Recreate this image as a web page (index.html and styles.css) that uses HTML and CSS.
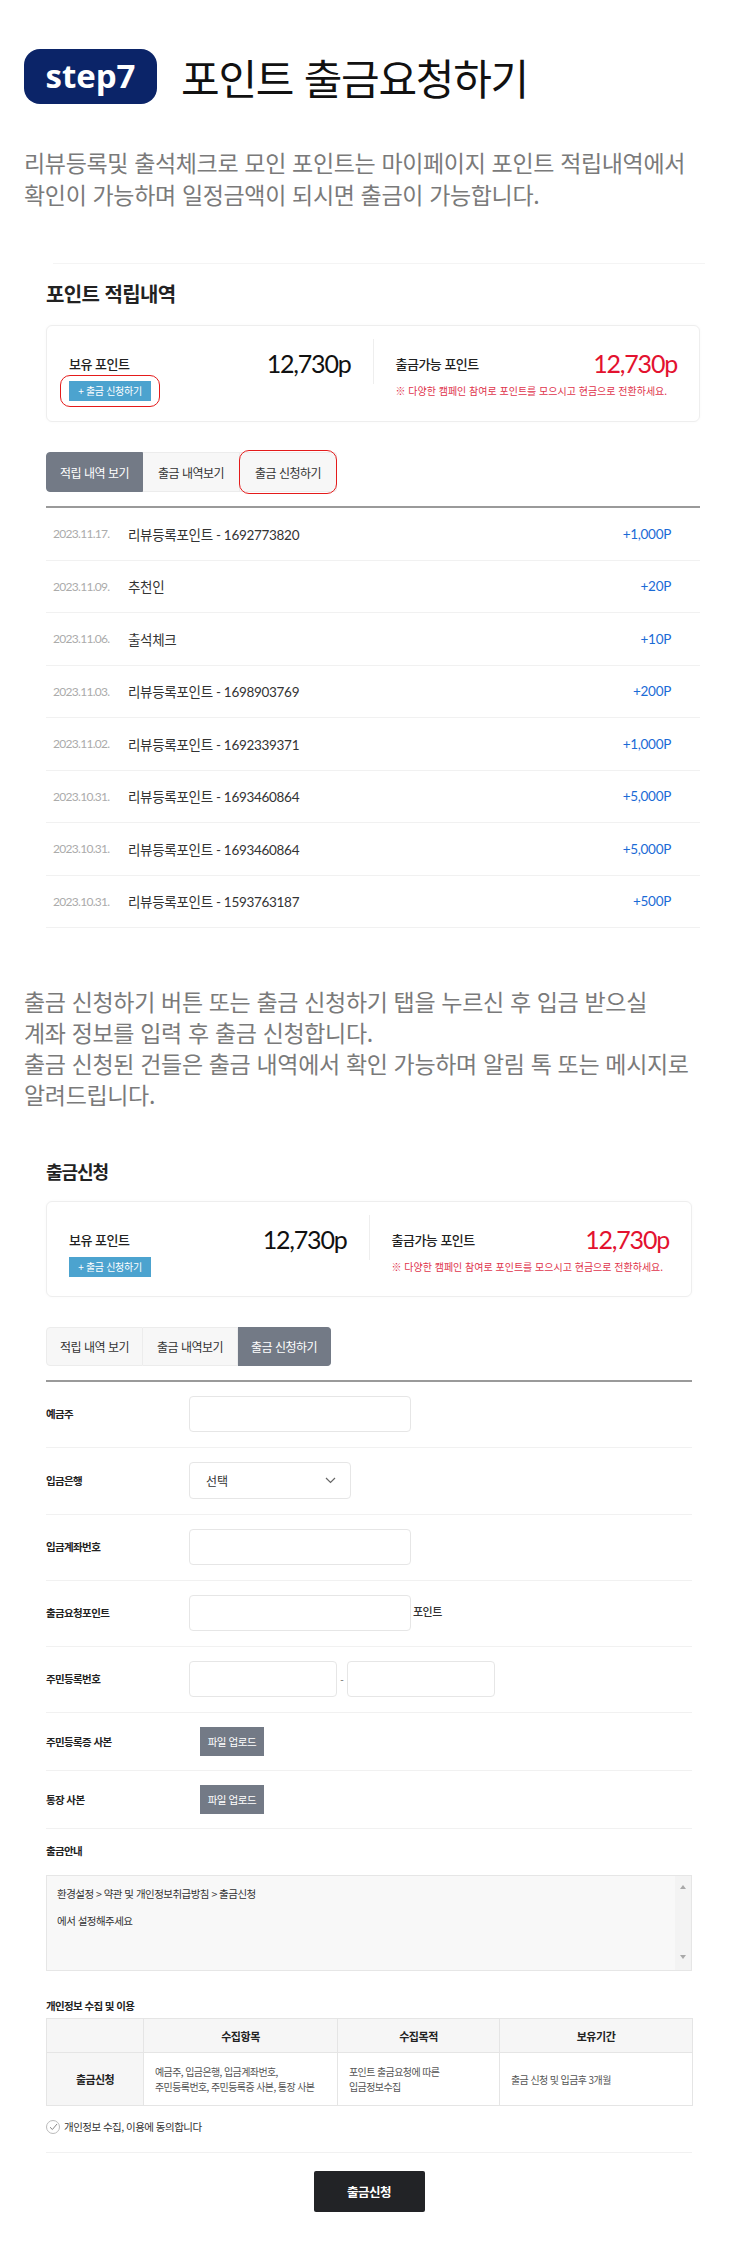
FILE: index.html
```html
<!DOCTYPE html>
<html lang="ko">
<head>
<meta charset="utf-8">
<title>step7 포인트 출금요청하기</title>
<link rel="stylesheet" href="styles.css">
</head>
<body>
<div class="page">
  <header class="step-head">
    <div class="step-badge">step7</div>
    <h1 class="step-title">포인트 출금요청하기</h1>
  </header>
  <p class="step-desc">리뷰등록및 출석체크로 모인 포인트는 마이페이지 포인트 적립내역에서<br>확인이 가능하며 일정금액이 되시면 출금이 가능합니다.</p>

  <section class="shot shot-1">
    <div class="shot-topline"></div>
    <h2 class="sec-title">포인트 적립내역</h2>
    <div class="point-card">
      <div class="pc-half">
        <div class="pc-row"><span class="pc-label">보유 포인트</span><span class="pc-value">12,730p</span></div>
        <div class="pc-sub"><span class="btn-apply annot annot-btn">+ 출금 신청하기</span></div>
      </div>
      <div class="pc-divider"></div>
      <div class="pc-half">
        <div class="pc-row"><span class="pc-label">출금가능 포인트</span><span class="pc-value red">12,730p</span></div>
        <p class="pc-note">※ 다양한 캠페인 참여로 포인트를 모으시고 현금으로 전환하세요.</p>
      </div>
    </div>
    <nav class="tabs">
      <span class="tab on">적립 내역 보기</span>
      <span class="tab">출금 내역보기</span>
      <span class="tab annot annot-tab">출금 신청하기</span>
    </nav>
    <ul class="hist">
      <li class="hist-row"><span class="h-date">2023.11.17.</span><span class="h-title">리뷰등록포인트 - 1692773820</span><span class="h-amt">+1,000P</span></li>
      <li class="hist-row"><span class="h-date">2023.11.09.</span><span class="h-title">추천인</span><span class="h-amt">+20P</span></li>
      <li class="hist-row"><span class="h-date">2023.11.06.</span><span class="h-title">출석체크</span><span class="h-amt">+10P</span></li>
      <li class="hist-row"><span class="h-date">2023.11.03.</span><span class="h-title">리뷰등록포인트 - 1698903769</span><span class="h-amt">+200P</span></li>
      <li class="hist-row"><span class="h-date">2023.11.02.</span><span class="h-title">리뷰등록포인트 - 1692339371</span><span class="h-amt">+1,000P</span></li>
      <li class="hist-row"><span class="h-date">2023.10.31.</span><span class="h-title">리뷰등록포인트 - 1693460864</span><span class="h-amt">+5,000P</span></li>
      <li class="hist-row"><span class="h-date">2023.10.31.</span><span class="h-title">리뷰등록포인트 - 1693460864</span><span class="h-amt">+5,000P</span></li>
      <li class="hist-row"><span class="h-date">2023.10.31.</span><span class="h-title">리뷰등록포인트 - 1593763187</span><span class="h-amt">+500P</span></li>
    </ul>
  </section>

  <p class="step-desc mid-desc">출금 신청하기 버튼 또는 출금 신청하기 탭을 누르신 후 입금 받으실<br>계좌 정보를 입력 후 출금 신청합니다.<br>출금 신청된 건들은 출금 내역에서 확인 가능하며 알림 톡 또는 메시지로<br>알려드립니다.</p>

  <section class="shot shot-2">
    <h2 class="sec-title sec-title-2">출금신청</h2>
    <div class="point-card">
      <div class="pc-half">
        <div class="pc-row"><span class="pc-label">보유 포인트</span><span class="pc-value">12,730p</span></div>
        <div class="pc-sub"><span class="btn-apply">+ 출금 신청하기</span></div>
      </div>
      <div class="pc-divider"></div>
      <div class="pc-half">
        <div class="pc-row"><span class="pc-label">출금가능 포인트</span><span class="pc-value red">12,730p</span></div>
        <p class="pc-note">※ 다양한 캠페인 참여로 포인트를 모으시고 현금으로 전환하세요.</p>
      </div>
    </div>
    <nav class="tabs tabs-2">
      <span class="tab">적립 내역 보기</span>
      <span class="tab">출금 내역보기</span>
      <span class="tab on">출금 신청하기</span>
    </nav>

    <div class="form">
      <div class="f-row"><span class="f-label">예금주</span><span class="inp"></span></div>
      <div class="f-row"><span class="f-label">입금은행</span>
        <span class="sel"><span>선택</span>
          <svg class="chev" width="11" height="7" viewBox="0 0 11 7"><path d="M1 1 L5.5 5.5 L10 1" fill="none" stroke="#666" stroke-width="1.2"/></svg>
        </span>
      </div>
      <div class="f-row"><span class="f-label">입금계좌번호</span><span class="inp"></span></div>
      <div class="f-row"><span class="f-label">출금요청포인트</span><span class="inp"></span><span class="f-suffix">포인트</span></div>
      <div class="f-row"><span class="f-label">주민등록번호</span><span class="inp inp-half"></span><span class="f-dash">-</span><span class="inp inp-half"></span></div>
      <div class="f-row f-row-file"><span class="f-label">주민등록증 사본</span><span class="btn-file">파일 업로드</span></div>
      <div class="f-row f-row-file"><span class="f-label">통장 사본</span><span class="btn-file">파일 업로드</span></div>
      <div class="f-info">
        <span class="f-label">출금안내</span>
        <div class="info-box">
          <div class="info-text">환경설정 &gt; 약관 및 개인정보취급방침 &gt; 출금신청<br><br>에서 설정해주세요</div>
          <div class="info-scroll"><span class="arr-up"></span><span class="arr-down"></span></div>
        </div>
      </div>
      <p class="f-label priv-label">개인정보 수집 및 이용</p>
      <table class="priv">
        <colgroup><col class="c1"><col class="c2"><col class="c3"><col class="c4"></colgroup>
        <thead>
          <tr><th></th><th>수집항목</th><th>수집목적</th><th>보유기간</th></tr>
        </thead>
        <tbody>
          <tr>
            <td class="td-head">출금신청</td>
            <td>예금주, 입금은행, 입금계좌번호,<br>주민등록번호, 주민등록증 사본, 통장 사본</td>
            <td>포인트 출금요청에 따른<br>입금정보수집</td>
            <td>출금 신청 및 입금후 3개월</td>
          </tr>
        </tbody>
      </table>
      <div class="agree">
        <span class="chk"><svg width="9" height="8" viewBox="0 0 9 8"><path d="M1 4.2 L3.4 6.5 L8 1" fill="none" stroke="#888" stroke-width="1"/></svg></span>
        <span>개인정보 수집, 이용에 동의합니다</span>
      </div>
      <div class="form-end">
        <span class="btn-submit">출금신청</span>
      </div>
    </div>
  </section>
</div>
</body>
</html>
```

FILE: styles.css
```css
* { box-sizing: border-box; margin: 0; padding: 0; }

body {
  background: #fff;
  font-family: "Noto Sans CJK KR", "Noto Sans", sans-serif;
  color: #222;
}

.page {
  width: 750px;
  padding: 49px 0 34px;
}

/* ---------- header ---------- */
.step-head {
  display: flex;
  align-items: center;
  gap: 24px;
  padding-left: 24px;
}
.step-badge {
  width: 133px;
  height: 55px;
  border-radius: 16px;
  background: #0b2468;
  color: #fff;
  font-family: "Open Sans", sans-serif;
  font-weight: 700;
  font-size: 33px;
  line-height: 1;
  display: flex;
  align-items: center;
  justify-content: center;
  padding-bottom: 3px;
}
.step-title {
  font-size: 42px;
  font-weight: 400;
  color: #111;
  line-height: 1;
  letter-spacing: -0.03em;
}
.step-desc {
  margin-top: 42px;
  padding-left: 24px;
  font-size: 23px;
  line-height: 32px;
  color: #7a7a7a;
  letter-spacing: -0.015em;
}
.mid-desc {
  margin-top: 58px;
  line-height: 31px;
}

/* ---------- screenshot sections ---------- */
.shot-1 { padding: 0 50px 0 46px; }
.shot-2 { padding: 0 58px 0 46px; }

.shot-topline {
  height: 1px;
  background: #f4f4f4;
  margin: 53px -5px 0 7px;
}
.sec-title {
  margin-top: 18px;
  font-size: 20px;
  font-weight: 700;
  line-height: 24px;
  color: #222;
  letter-spacing: -0.03em;
}
.sec-title-2 {
  margin-top: 49px;
  font-size: 18px;
  letter-spacing: -0.06em;
}

.point-card {
  margin-top: 19px;
  display: flex;
  align-items: flex-start;
  border: 1px solid #eeeeee;
  border-radius: 6px;
  padding: 13px 0 20px;
  box-shadow: 0 0 3px rgba(0, 0, 0, 0.03);
}
.shot-2 .point-card { margin-top: 18px; padding-bottom: 19px; }
.pc-half {
  flex: 1;
  padding: 11px 22px 0 22px;
}
.pc-divider {
  width: 1px;
  height: 45px;
  background: #eeeeee;
}
.pc-row {
  display: flex;
  justify-content: space-between;
  align-items: center;
  height: 26px;
}
.pc-label {
  font-size: 13px;
  font-weight: 500;
  color: #222;
  letter-spacing: -0.04em;
}
.pc-value {
  font-family: "Lato", sans-serif;
  font-size: 25px;
  font-weight: 400;
  color: #111;
  letter-spacing: -1.2px;
  line-height: 26px;
}
.pc-value.red { color: #e3122f; }
.pc-sub { margin-top: 5px; display: flex; }
.btn-apply {
  display: inline-block;
  width: 82px;
  height: 20px;
  line-height: 20px;
  text-align: center;
  background: #4ca3cf;
  color: #fff;
  font-size: 10px;
  letter-spacing: -0.03em;
}
.pc-note {
  margin-top: 8px;
  font-size: 10px;
  line-height: 14px;
  color: #e0344c;
  letter-spacing: 0;
  white-space: nowrap;
}

/* red annotation outlines drawn over the UI */
.annot { position: relative; }
.annot::after {
  content: "";
  position: absolute;
  border: 1.5px solid #e41b1b;
  border-radius: 10px;
  pointer-events: none;
}
.annot-btn::after { inset: -6px -9px; }
.annot-tab::after { inset: -3px -1px; }

/* ---------- tabs ---------- */
.tabs {
  margin-top: 30px;
  display: flex;
}
.tab {
  width: 97px;
  height: 40px;
  display: flex;
  align-items: center;
  justify-content: center;
  background: #f7f7f7;
  border: 1px solid #ececec;
  border-left: none;
  font-size: 12px;
  color: #333;
  letter-spacing: -0.04em;
}
.tab:first-child { border-left: 1px solid #ececec; border-radius: 4px 0 0 4px; }
.tab:last-child { border-radius: 0 4px 4px 0; }
.tab.on { background: #737a86; border-color: #737a86; color: #fff; }
.tabs-2 .tab { height: 39px; }
.tabs-2 .tab:nth-child(2) { width: 95px; }
.tabs-2 .tab:nth-child(3) { width: 93px; }

/* ---------- history list ---------- */
.hist {
  list-style: none;
  margin-top: 14px;
  border-top: 2px solid #9a9a9a;
}
.hist-row {
  height: 52.5px;
  display: flex;
  align-items: center;
  padding: 0 29px 0 7px;
  border-bottom: 1px solid #f1f1f1;
}
.h-date {
  width: 75px;
  font-family: "Lato", sans-serif;
  font-size: 12px;
  color: #ababab;
  letter-spacing: -0.7px;
}
.h-title {
  flex: 1;
  font-family: "Lato", "Noto Sans CJK KR", sans-serif;
  font-size: 13.5px;
  color: #333;
  letter-spacing: -0.3px;
}
.h-amt {
  font-family: "Lato", sans-serif;
  font-size: 13.5px;
  color: #1b6bd6;
  letter-spacing: -0.3px;
}

/* ---------- form ---------- */
.form {
  margin-top: 14px;
  border-top: 2px solid #9a9a9a;
}
.f-row {
  display: flex;
  align-items: center;
  padding: 14px 0 15px;
  border-bottom: 1px solid #f1f1f1;
}
.f-row-file { padding: 14px 0 14px; }
.f-label {
  display: block;
  width: 143px;
  flex: none;
  font-size: 10.5px;
  font-weight: 700;
  color: #222;
  line-height: 16px;
  letter-spacing: -0.06em;
}
.inp {
  display: block;
  width: 222px;
  height: 36px;
  border: 1px solid #e6e6e6;
  border-radius: 4px;
  background: #fff;
}
.inp-half { width: 148px; }
.f-dash {
  width: 10px;
  text-align: center;
  font-size: 10px;
  color: #666;
}
.f-suffix {
  margin-left: 2px;
  margin-top: -4px;
  font-size: 11px;
  font-weight: 500;
  color: #333;
  letter-spacing: -0.05em;
}
.sel {
  width: 162px;
  height: 37px;
  border: 1px solid #e6e6e6;
  border-radius: 4px;
  display: flex;
  align-items: center;
  justify-content: space-between;
  padding: 0 14px 0 16px;
  font-size: 12px;
  color: #333;
}
.btn-file {
  margin-left: 11px;
  width: 64px;
  height: 29px;
  display: flex;
  align-items: center;
  justify-content: center;
  background: #737a86;
  color: #fff;
  font-size: 10.5px;
  letter-spacing: -0.04em;
}

.f-info { padding-top: 14px; }
.info-box {
  margin-top: 16px;
  height: 96px;
  display: flex;
  border: 1px solid #e6e6e6;
  background: #f8f8f8;
}
.info-text {
  flex: 1;
  padding: 11px 10px;
  font-size: 10.5px;
  line-height: 13.5px;
  color: #333;
  letter-spacing: -0.05em;
}
.info-scroll {
  width: 16px;
  display: flex;
  flex-direction: column;
  justify-content: space-between;
  align-items: center;
  padding: 9px 0 11px;
  background: #f3f3f3;
}
.arr-up, .arr-down {
  width: 0;
  height: 0;
  border-left: 3.5px solid transparent;
  border-right: 3.5px solid transparent;
}
.arr-up { border-bottom: 4px solid #a8a8a8; }
.arr-down { border-top: 4px solid #a8a8a8; }

.priv-label { width: auto; margin-top: 27px; }
.priv {
  margin-top: 4px;
  width: 100%;
  border-collapse: collapse;
  table-layout: fixed;
}
.priv .c1 { width: 97px; }
.priv .c2 { width: 194px; }
.priv .c3 { width: 162px; }
.priv .c4 { width: 193px; }
.priv th, .priv td { border: 1px solid #e5e5e5; }
.priv th {
  height: 34px;
  background: #f6f6f6;
  font-size: 11px;
  font-weight: 700;
  color: #222;
  letter-spacing: -0.04em;
}
.priv td {
  height: 53px;
  padding: 0 0 0 11px;
  font-size: 10px;
  line-height: 15px;
  color: #555;
  text-align: left;
  letter-spacing: -0.06em;
  white-space: nowrap;
}
.priv td.td-head {
  padding: 0;
  background: #f6f6f6;
  text-align: center;
  font-size: 11px;
  font-weight: 700;
  color: #222;
}

.agree {
  margin-top: 14px;
  display: flex;
  align-items: center;
  gap: 4px;
  font-size: 10.5px;
  line-height: 14px;
  color: #333;
  letter-spacing: -0.05em;
}
.chk {
  width: 14px;
  height: 14px;
  border: 1px solid #bbb;
  border-radius: 50%;
  display: flex;
  align-items: center;
  justify-content: center;
}
.form-end {
  margin-top: 18px;
  border-top: 1px solid #f1f1f1;
  padding-top: 18px;
  display: flex;
  justify-content: center;
}
.btn-submit {
  width: 111px;
  height: 41px;
  display: flex;
  align-items: center;
  justify-content: center;
  background: #222326;
  color: #fff;
  border-radius: 2px;
  font-size: 12.5px;
  font-weight: 700;
  letter-spacing: -0.04em;
}
```
